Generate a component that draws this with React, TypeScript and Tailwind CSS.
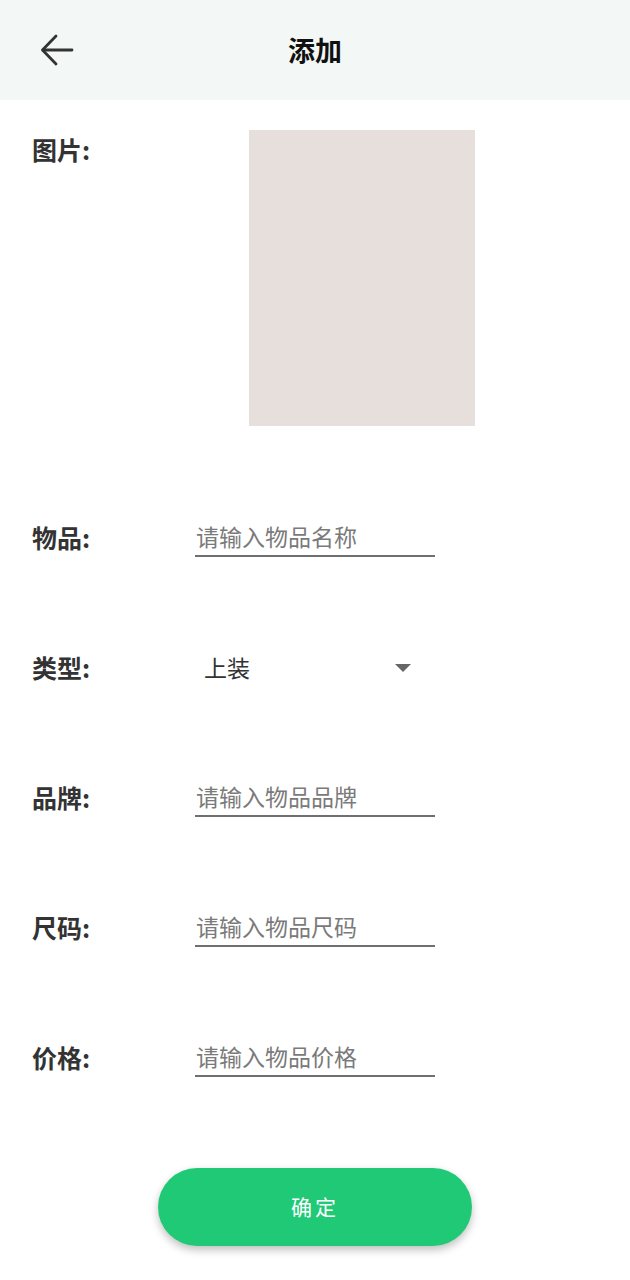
import { useState } from "react"

const fields = [
  { label: "物品", placeholder: "请输入物品名称" },
  { label: "品牌", placeholder: "请输入物品品牌" },
  { label: "尺码", placeholder: "请输入物品尺码" },
  { label: "价格", placeholder: "请输入物品价格" },
]

function Label({ children }: { children: string }) {
  return (
    <span className="w-[163px] shrink-0 mb-[5px] text-[25px] font-bold text-[#333333] leading-none">
      {children}:
    </span>
  )
}

function InputRow({ label, placeholder }: { label: string; placeholder: string }) {
  return (
    <div className="h-[130px] flex items-center pl-8">
      <Label>{label}</Label>
      <div className="w-[240px] h-[40px] mb-[6px] border-b-2 border-[#6f6f6f] flex items-center">
        <input
          className="w-full bg-transparent outline-none text-[23px] text-[#333] placeholder:text-[#7a7a7a] pl-[1px]"
          placeholder={placeholder}
        />
      </div>
    </div>
  )
}

export default function App() {
  const [type] = useState("上装")

  return (
    <div
      className="w-[630px] min-h-[1280px] bg-white"
      style={{ fontFamily: '"Noto Sans CJK SC", "Noto Sans", sans-serif' }}
    >
      {/* Header */}
      <header className="h-[100px] bg-[#f3f8f6] flex items-center relative">
        <button className="absolute left-[38px] top-[32px] w-[38px] h-[36px] flex items-center justify-center">
          <svg width="36" height="34" viewBox="0 0 36 34" fill="none" stroke="#333" strokeWidth="2.8" strokeLinecap="round" strokeLinejoin="round">
            <path d="M33 17H4" />
            <path d="M17 3L3.5 17L17 31" />
          </svg>
        </button>
        <h1 className="w-full text-center text-[27px] font-bold text-[#111] leading-none mb-[2px]">添加</h1>
      </header>

      {/* Picture */}
      <div className="flex pl-8 pt-[30px]">
        <div className="w-[217px] shrink-0 pt-[7px]">
          <span className="text-[25px] font-bold text-[#333] leading-none">图片:</span>
        </div>
        <div className="w-[226px] h-[296px] bg-[#e6dfdc]" />
      </div>

      <div className="mt-[49px]">
        <InputRow {...fields[0]} />

        {/* Type select */}
        <div className="h-[130px] flex items-center pl-8">
          <Label>类型</Label>
          <div className="w-[240px] h-[40px] mb-[6px] flex items-center justify-between pl-[9px] pr-[24px]">
            <span className="text-[23px] text-[#333]">{type}</span>
            <svg width="16" height="8" viewBox="0 0 16 8" className="mt-[2px]">
              <path d="M0 0H16L8 8Z" fill="#666" />
            </svg>
          </div>
        </div>

        {fields.slice(1).map((f) => (
          <InputRow key={f.label} {...f} />
        ))}
      </div>

      {/* Submit */}
      <div className="flex justify-center mt-[43px]">
        <button className="w-[314px] h-[78px] rounded-full bg-[#20c975] text-white text-[21px] tracking-[3px] shadow-[0_4px_8px_rgba(0,0,0,0.25)]">
          确定
        </button>
      </div>
    </div>
  )
}
